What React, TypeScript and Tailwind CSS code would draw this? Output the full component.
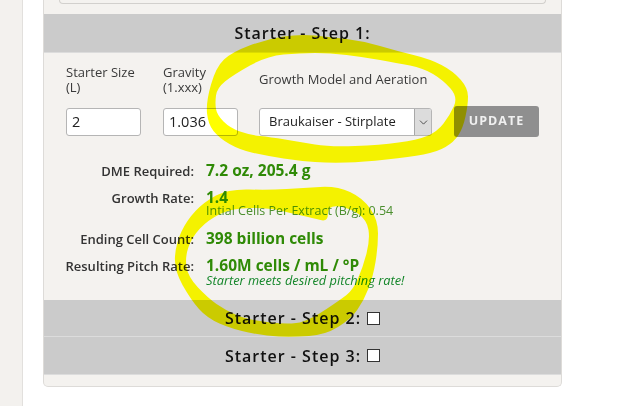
import { ChevronDown } from "lucide-react";

type Pt = [number, number];

// marker strokes drawn over the screenshot, outer and inner edge of each ring
const upperOuter: Pt[] = [[300,34],[330,37],[363,41],[397,51],[430,59],[453,71],[468,88],[468,105],[463,128],[454,142],[437,152],[410,157],[363,162],[330,163],[300,161],[267,156],[240,150],[219,138],[208,124],[206,102],[216,67],[232,52],[267,39]];
const upperInner: Pt[] = [[300,53],[267,56],[233,75],[217,88],[215,103],[217,115],[230,128],[250,135],[270,137],[300,142],[330,147],[380,145],[417,140],[437,132],[450,115],[458,97],[443,80],[423,68],[397,63],[363,57],[330,53]];
const lowerOuter: Pt[] = [[270,190],[303,188],[337,186],[363,198],[378,220],[378,247],[373,277],[364,300],[351,319],[325,335],[293,337],[265,336],[232,329],[207,318],[191,300],[174,270],[176,243],[187,220],[204,202],[228,189]];
const lowerInner: Pt[] = [[232,208],[208,220],[192,237],[185,257],[188,277],[208,298],[225,310],[248,320],[293,325],[313,318],[340,300],[353,290],[363,267],[370,240],[367,220],[350,208],[328,205],[328,222],[313,218],[290,213],[270,208]];

function smooth(pts: Pt[]) {
  const mid = (a: Pt, b: Pt) => `${(a[0] + b[0]) / 2} ${(a[1] + b[1]) / 2}`;
  let d = `M${mid(pts[pts.length - 1], pts[0])}`;
  pts.forEach((p, i) => {
    d += ` Q${p[0]} ${p[1]} ${mid(p, pts[(i + 1) % pts.length])}`;
  });
  return d + " Z";
}

function Field({ label, value, width }: { label: React.ReactNode; value: string; width: string }) {
  return (
    <div className={`flex flex-col ${width}`}>
      <div className="h-[32px] flex items-center text-[13px] leading-[15px] text-[#3a3a3a]">{label}</div>
      <div className="mt-[12px] h-[28px] bg-white border border-[#b5b5b5] rounded-[3px] flex items-center pl-[5px] text-[14.5px] text-[#222]">
        {value}
      </div>
    </div>
  );
}

function ResultRow({ label, value, note, noteClass }: { label: string; value: string; note?: string; noteClass?: string }) {
  return (
    <div className="flex">
      <div className="w-[150px] text-right text-[13px] font-semibold leading-[20px] pt-[1px] text-[#333]">{label}</div>
      <div className="ml-[12px]">
        <div className="text-[15.5px] font-bold leading-[20px] text-[#2f8a06]">{value}</div>
        {note && <div className={`leading-[12px] ${noteClass}`}>{note}</div>}
      </div>
    </div>
  );
}

function StepHeader({ title, height }: { title: string; height: string }) {
  return (
    <div className={`${height} bg-[#cbcbcb] border-b border-[#dcdcdc] flex items-center justify-center gap-[6px] text-[16px] font-semibold tracking-[1px] text-[#111]`}>
      {title}
      <input type="checkbox" readOnly className="appearance-none w-[13px] h-[13px] bg-white border border-[#333]" />
    </div>
  );
}

export default function App() {
  return (
    <div className="relative w-[637px] h-[406px] overflow-hidden bg-white flex font-['Open_Sans',sans-serif]">
      <div className="w-[23px] h-full bg-[#f3f1ee] border-r border-[#e2e0dd]" />

      <div className="ml-[20px] w-[519px] h-[387px] bg-[#f4f2ef] border-x border-b border-[#dddbd8] rounded-b-[5px] flex flex-col">
        <div className="mx-[15px] h-[4px] bg-[#f4f2ef] border-x border-b border-[#d2d0cd] rounded-b-[4px]" />

        <div className="mt-[10px] h-[39px] bg-[#cbcbcb] border-b border-[#dcdcdc] flex items-center justify-center text-[16px] font-semibold tracking-[1px] text-[#111]">
          Starter - Step 1:
        </div>

        <div className="mt-[11px] ml-[22px] flex items-start">
          <Field label={<span>Starter Size<br />(L)</span>} value="2" width="w-[75px]" />
          <Field label={<span>Gravity<br />(1.xxx)</span>} value="1.036" width="w-[75px] ml-[22px]" />
          <div className="ml-[21px] w-[173px] flex flex-col">
            <div className="h-[32px] flex items-center text-[13px] whitespace-nowrap text-[#3a3a3a]">Growth Model and Aeration</div>
            <div className="mt-[12px] h-[28px] bg-white border border-[#b5b5b5] rounded-[3px] flex items-stretch text-[13px] text-[#222]">
              <div className="flex-1 flex items-center pl-[9px]">Braukaiser - Stirplate</div>
              <div className="w-[17px] bg-[#dcdcdc] border-l border-[#a8a8a8] rounded-r-[2px] flex items-center justify-center">
                <ChevronDown size={13} strokeWidth={1.5} className="text-[#333]" />
              </div>
            </div>
          </div>
          <div className="ml-[22px] mt-[42px] w-[85px] h-[31px] bg-[#8f8f8f] rounded-[3px] flex items-center justify-center text-[12.5px] font-bold tracking-[1px] text-[#f0f0f0]">
            UPDATE
          </div>
        </div>

        <div className="mt-[23px] flex flex-col gap-[6px]">
          <ResultRow label="DME Required:" value="7.2 oz, 205.4 g" />
          <ResultRow label="Growth Rate:" value="1.4" note="Intial Cells Per Extract (B/g): 0.54" noteClass="text-[12.5px] -mt-[2px] mb-[5px] text-[#4c8f2f]" />
          <ResultRow label="Ending Cell Count:" value="398 billion cells" />
          <ResultRow label="Resulting Pitch Rate:" value="1.60M cells / mL / °P" note="Starter meets desired pitching rate!" noteClass="text-[12.8px] -mt-[1px] italic text-[#14862a]" />
        </div>

        <div className="mt-auto mb-[11px]">
          <StepHeader title="Starter - Step 2:" height="h-[37px]" />
          <StepHeader title="Starter - Step 3:" height="h-[38px]" />
        </div>
      </div>

      <svg className="absolute inset-0 mix-blend-multiply pointer-events-none" width={637} height={406}>
        <path d={`${smooth(upperOuter)} ${smooth(upperInner)}`} fill="#ffff00" fillRule="evenodd" />
        <path d={`${smooth(lowerOuter)} ${smooth(lowerInner)}`} fill="#ffff00" fillRule="evenodd" />
      </svg>
    </div>
  );
}
